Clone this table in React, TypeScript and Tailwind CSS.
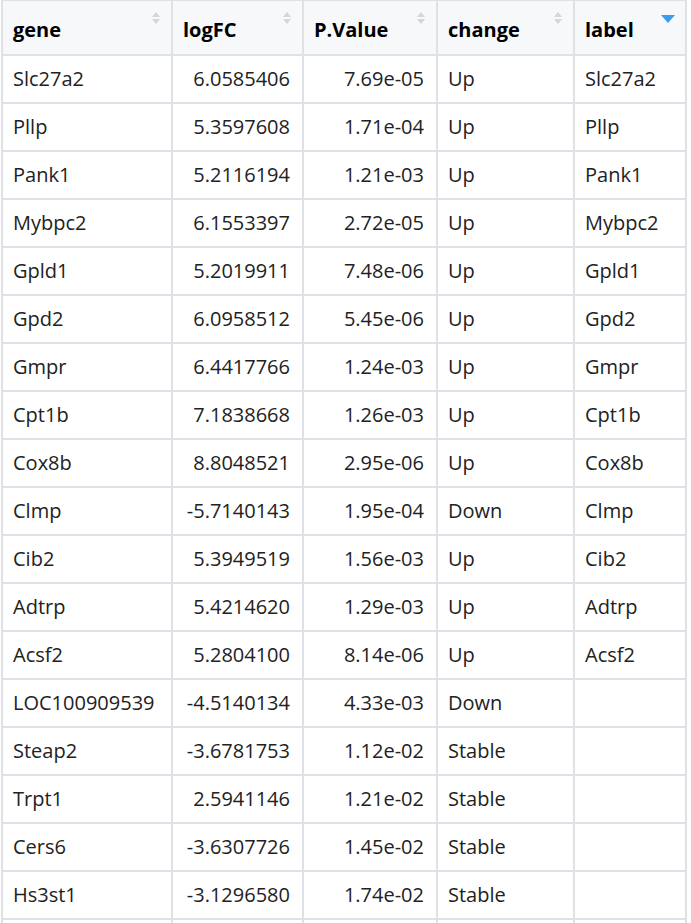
import React from "react";

type Row = {
  gene: string;
  logFC: string;
  pValue: string;
  change: string;
  label: string;
};

const rows: Row[] = [
  { gene: "Slc27a2", logFC: "6.0585406", pValue: "7.69e-05", change: "Up", label: "Slc27a2" },
  { gene: "Pllp", logFC: "5.3597608", pValue: "1.71e-04", change: "Up", label: "Pllp" },
  { gene: "Pank1", logFC: "5.2116194", pValue: "1.21e-03", change: "Up", label: "Pank1" },
  { gene: "Mybpc2", logFC: "6.1553397", pValue: "2.72e-05", change: "Up", label: "Mybpc2" },
  { gene: "Gpld1", logFC: "5.2019911", pValue: "7.48e-06", change: "Up", label: "Gpld1" },
  { gene: "Gpd2", logFC: "6.0958512", pValue: "5.45e-06", change: "Up", label: "Gpd2" },
  { gene: "Gmpr", logFC: "6.4417766", pValue: "1.24e-03", change: "Up", label: "Gmpr" },
  { gene: "Cpt1b", logFC: "7.1838668", pValue: "1.26e-03", change: "Up", label: "Cpt1b" },
  { gene: "Cox8b", logFC: "8.8048521", pValue: "2.95e-06", change: "Up", label: "Cox8b" },
  { gene: "Clmp", logFC: "-5.7140143", pValue: "1.95e-04", change: "Down", label: "Clmp" },
  { gene: "Cib2", logFC: "5.3949519", pValue: "1.56e-03", change: "Up", label: "Cib2" },
  { gene: "Adtrp", logFC: "5.4214620", pValue: "1.29e-03", change: "Up", label: "Adtrp" },
  { gene: "Acsf2", logFC: "5.2804100", pValue: "8.14e-06", change: "Up", label: "Acsf2" },
  { gene: "LOC100909539", logFC: "-4.5140134", pValue: "4.33e-03", change: "Down", label: "" },
  { gene: "Steap2", logFC: "-3.6781753", pValue: "1.12e-02", change: "Stable", label: "" },
  { gene: "Trpt1", logFC: "2.5941146", pValue: "1.21e-02", change: "Stable", label: "" },
  { gene: "Cers6", logFC: "-3.6307726", pValue: "1.45e-02", change: "Stable", label: "" },
  { gene: "Hs3st1", logFC: "-3.1296580", pValue: "1.74e-02", change: "Stable", label: "" },
];

// neutral up/down sort arrows
function SortBoth() {
  return (
    <svg width="10" height="14" viewBox="0 0 10 14" className="absolute right-[10px] top-[10px]">
      <path d="M1 6 L5 1 L9 6 Z" fill="#d3d6da" />
      <path d="M1 8 L5 13 L9 8 Z" fill="#d3d6da" />
    </svg>
  );
}

// active descending arrow
function SortDesc() {
  return (
    <svg width="14" height="8" viewBox="0 0 14 8" className="absolute right-[10px] top-[14px]">
      <path d="M0 0 L14 0 L7 8 Z" fill="#3b9ded" />
    </svg>
  );
}

const th = "relative border-2 border-[#dee2e6] bg-[#f6f8fa] h-[55px] pl-[10px] pr-3 pt-1 text-left font-bold text-[20px] text-black align-middle";
const td = "border-2 border-[#dee2e6] h-[48px] pl-[10px] pr-3 text-[20px] text-[#222] align-middle whitespace-nowrap";

export default function App() {
  return (
    <div className="w-[691px] h-[923px] overflow-hidden bg-white pl-px" style={{ fontFamily: "'Open Sans', 'Noto Sans', sans-serif" }}>
      <table className="table-fixed border-collapse w-[684px] -mt-px">
        <colgroup>
          <col className="w-[170px]" />
          <col className="w-[131px]" />
          <col className="w-[134px]" />
          <col className="w-[137px]" />
          <col className="w-[112px]" />
        </colgroup>
        <thead>
          <tr>
            <th className={th}>gene<SortBoth /></th>
            <th className={th}>logFC<SortBoth /></th>
            <th className={th}>P.Value<SortBoth /></th>
            <th className={th}>change<SortBoth /></th>
            <th className={th}>label<SortDesc /></th>
          </tr>
        </thead>
        <tbody>
          {rows.map((r) => (
            <tr key={r.gene}>
              <td className={td}>{r.gene}</td>
              <td className={`${td} text-right`}>{r.logFC}</td>
              <td className={`${td} text-right`}>{r.pValue}</td>
              <td className={td}>{r.change}</td>
              <td className={td}>{r.label}</td>
            </tr>
          ))}
          {/* next row, only its top edge shows */}
          <tr>
            <td className={td}></td>
            <td className={td}></td>
            <td className={td}></td>
            <td className={td}></td>
            <td className={td}></td>
          </tr>
        </tbody>
      </table>
    </div>
  );
}
